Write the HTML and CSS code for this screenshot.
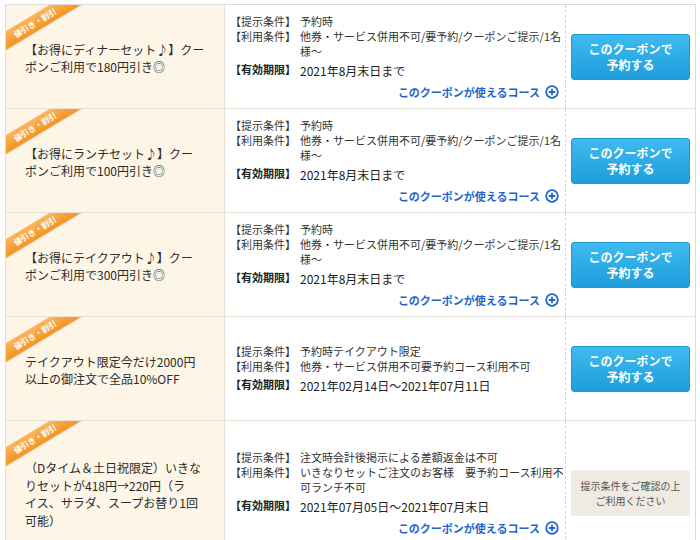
FILE: index.html
```html
<!DOCTYPE html>
<html lang="ja">
<head>
<meta charset="utf-8">
<title>クーポン</title>
<link rel="stylesheet" href="styles.css">
</head>
<body>
<div class="coupons">
  <div class="row">
    <div class="title"><span class="ribbon">値引き・割引</span><p>【お得にディナーセット♪】クー<br>ポンご利用で180円引き◎</p></div>
    <div class="info">
      <dl class="conds">
        <div class="cond"><dt>【提示条件】</dt><dd>予約時</dd></div>
        <div class="cond"><dt>【利用条件】</dt><dd>他券・サービス併用不可/要予約/クーポンご提示/1名様〜</dd></div>
        <div class="cond limit"><dt>【有効期限】</dt><dd>2021年8月末日まで</dd></div>
      </dl>
      <a class="course" href="#">このクーポンが使えるコース<svg class="plus" viewBox="0 0 14 14" width="14" height="14"><circle cx="7" cy="7" r="5.8" fill="#fff" stroke="#1f64cc" stroke-width="1.8"/><path d="M7 3.8v6.4M3.8 7h6.4" stroke="#1f64cc" stroke-width="1.8"/></svg></a>
    </div>
    <div class="action"><a class="btn" href="#">このクーポンで<br>予約する</a></div>
  </div>
  <div class="row">
    <div class="title"><span class="ribbon">値引き・割引</span><p>【お得にランチセット♪】クー<br>ポンご利用で100円引き◎</p></div>
    <div class="info">
      <dl class="conds">
        <div class="cond"><dt>【提示条件】</dt><dd>予約時</dd></div>
        <div class="cond"><dt>【利用条件】</dt><dd>他券・サービス併用不可/要予約/クーポンご提示/1名様〜</dd></div>
        <div class="cond limit"><dt>【有効期限】</dt><dd>2021年8月末日まで</dd></div>
      </dl>
      <a class="course" href="#">このクーポンが使えるコース<svg class="plus" viewBox="0 0 14 14" width="14" height="14"><circle cx="7" cy="7" r="5.8" fill="#fff" stroke="#1f64cc" stroke-width="1.8"/><path d="M7 3.8v6.4M3.8 7h6.4" stroke="#1f64cc" stroke-width="1.8"/></svg></a>
    </div>
    <div class="action"><a class="btn" href="#">このクーポンで<br>予約する</a></div>
  </div>
  <div class="row">
    <div class="title"><span class="ribbon">値引き・割引</span><p>【お得にテイクアウト♪】クー<br>ポンご利用で300円引き◎</p></div>
    <div class="info">
      <dl class="conds">
        <div class="cond"><dt>【提示条件】</dt><dd>予約時</dd></div>
        <div class="cond"><dt>【利用条件】</dt><dd>他券・サービス併用不可/要予約/クーポンご提示/1名様〜</dd></div>
        <div class="cond limit"><dt>【有効期限】</dt><dd>2021年8月末日まで</dd></div>
      </dl>
      <a class="course" href="#">このクーポンが使えるコース<svg class="plus" viewBox="0 0 14 14" width="14" height="14"><circle cx="7" cy="7" r="5.8" fill="#fff" stroke="#1f64cc" stroke-width="1.8"/><path d="M7 3.8v6.4M3.8 7h6.4" stroke="#1f64cc" stroke-width="1.8"/></svg></a>
    </div>
    <div class="action"><a class="btn" href="#">このクーポンで<br>予約する</a></div>
  </div>
  <div class="row">
    <div class="title"><span class="ribbon">値引き・割引</span><p>テイクアウト限定今だけ2000円<br>以上の御注文で全品10%OFF</p></div>
    <div class="info">
      <dl class="conds">
        <div class="cond"><dt>【提示条件】</dt><dd>予約時テイクアウト限定</dd></div>
        <div class="cond"><dt>【利用条件】</dt><dd>他券・サービス併用不可要予約コース利用不可</dd></div>
        <div class="cond limit"><dt>【有効期限】</dt><dd>2021年02月14日〜2021年07月11日</dd></div>
      </dl>
    </div>
    <div class="action"><a class="btn" href="#">このクーポンで<br>予約する</a></div>
  </div>
  <div class="row row--tall">
    <div class="title"><span class="ribbon">値引き・割引</span><p>（Dタイム＆土日祝限定）いきな<br>りセットが418円→220円（ラ<br>イス、サラダ、スープお替り1回<br>可能）</p></div>
    <div class="info">
      <dl class="conds">
        <div class="cond"><dt>【提示条件】</dt><dd>注文時会計後掲示による差額返金は不可</dd></div>
        <div class="cond"><dt>【利用条件】</dt><dd>いきなりセットご注文のお客様　要予約コース利用不可ランチ不可</dd></div>
        <div class="cond limit"><dt>【有効期限】</dt><dd>2021年07月05日〜2021年07月末日</dd></div>
      </dl>
      <a class="course" href="#">このクーポンが使えるコース<svg class="plus" viewBox="0 0 14 14" width="14" height="14"><circle cx="7" cy="7" r="5.8" fill="#fff" stroke="#1f64cc" stroke-width="1.8"/><path d="M7 3.8v6.4M3.8 7h6.4" stroke="#1f64cc" stroke-width="1.8"/></svg></a>
    </div>
    <div class="action"><div class="notice">提示条件をご確認の上<br>ご利用ください</div></div>
  </div>
</div>
</body>
</html>
```
FILE: styles.css
```css
html, body {
  margin: 0;
  background: #fff;
}
body {
  padding: 4px 0 0 5px;
  font-family: "Noto Sans CJK JP", "Noto Sans", sans-serif;
  color: #333;
}
.coupons {
  width: 691px;
  box-sizing: border-box;
  border: 1px solid #dcdcdc;
  border-bottom: none;
}
.row {
  display: grid;
  grid-template-columns: 219px 341px 1fr;
  min-height: 104px;
  box-sizing: border-box;
  border-bottom: 1px solid #e6e2d8;
}
.row--tall {
  min-height: 144px;
}
.title {
  position: relative;
  overflow: hidden;
  background: #fdf6e6;
  border-right: 1px solid #e6e2d8;
  display: flex;
  align-items: center;
  padding: 3px 10px 0 19px;
}
.title p {
  margin: 0;
  font-size: 12px;
  line-height: 17.5px;
  color: #2b2b2b;
  white-space: nowrap;
}
.ribbon {
  position: absolute;
  left: -21px;
  top: 10px;
  width: 100px;
  height: 16px;
  line-height: 16px;
  background: linear-gradient(#fbb65e, #f39420);
  color: #fff;
  font-size: 8px;
  font-weight: bold;
  text-align: center;
  transform: rotate(-31deg);
  box-shadow: 0 1px 1px rgba(0,0,0,0.12);
}
.info {
  display: flex;
  flex-direction: column;
  justify-content: center;
  padding: 8px 0 8px 5px;
  border-right: 1px dashed #d4d4d4;
}
.conds {
  margin: 0;
}
.cond {
  display: flex;
  font-size: 11px;
  line-height: 15px;
}
.cond dt {
  flex: none;
  width: 70px;
}
.cond dd {
  margin: 0;
  flex: 1;
}
.limit {
  margin-top: 3px;
}
.limit dt {
  font-weight: bold;
  color: #222;
}
.limit dd {
  font-size: 12px;
  line-height: 17px;
  color: #222;
}
.course {
  align-self: flex-end;
  display: flex;
  align-items: center;
  gap: 5px;
  margin: 6px 6px 0 0;
  font-size: 11px;
  line-height: 15px;
  font-weight: bold;
  color: #1f64cc;
  text-decoration: none;
}
.plus {
  display: block;
}
.action {
  display: flex;
  align-items: center;
  justify-content: center;
}
.btn, .notice {
  width: 119px;
  height: 46px;
  box-sizing: border-box;
  display: flex;
  align-items: center;
  justify-content: center;
  text-align: center;
  border-radius: 3px;
}
.btn {
  background: linear-gradient(#3fbaef, #1e9edd);
  border: 1px solid #1c97d6;
  color: #fff;
  font-size: 12px;
  font-weight: bold;
  line-height: 16px;
  text-decoration: none;
}
.notice {
  background: #efebe2;
  color: #555;
  font-size: 10px;
  line-height: 15px;
}
```
